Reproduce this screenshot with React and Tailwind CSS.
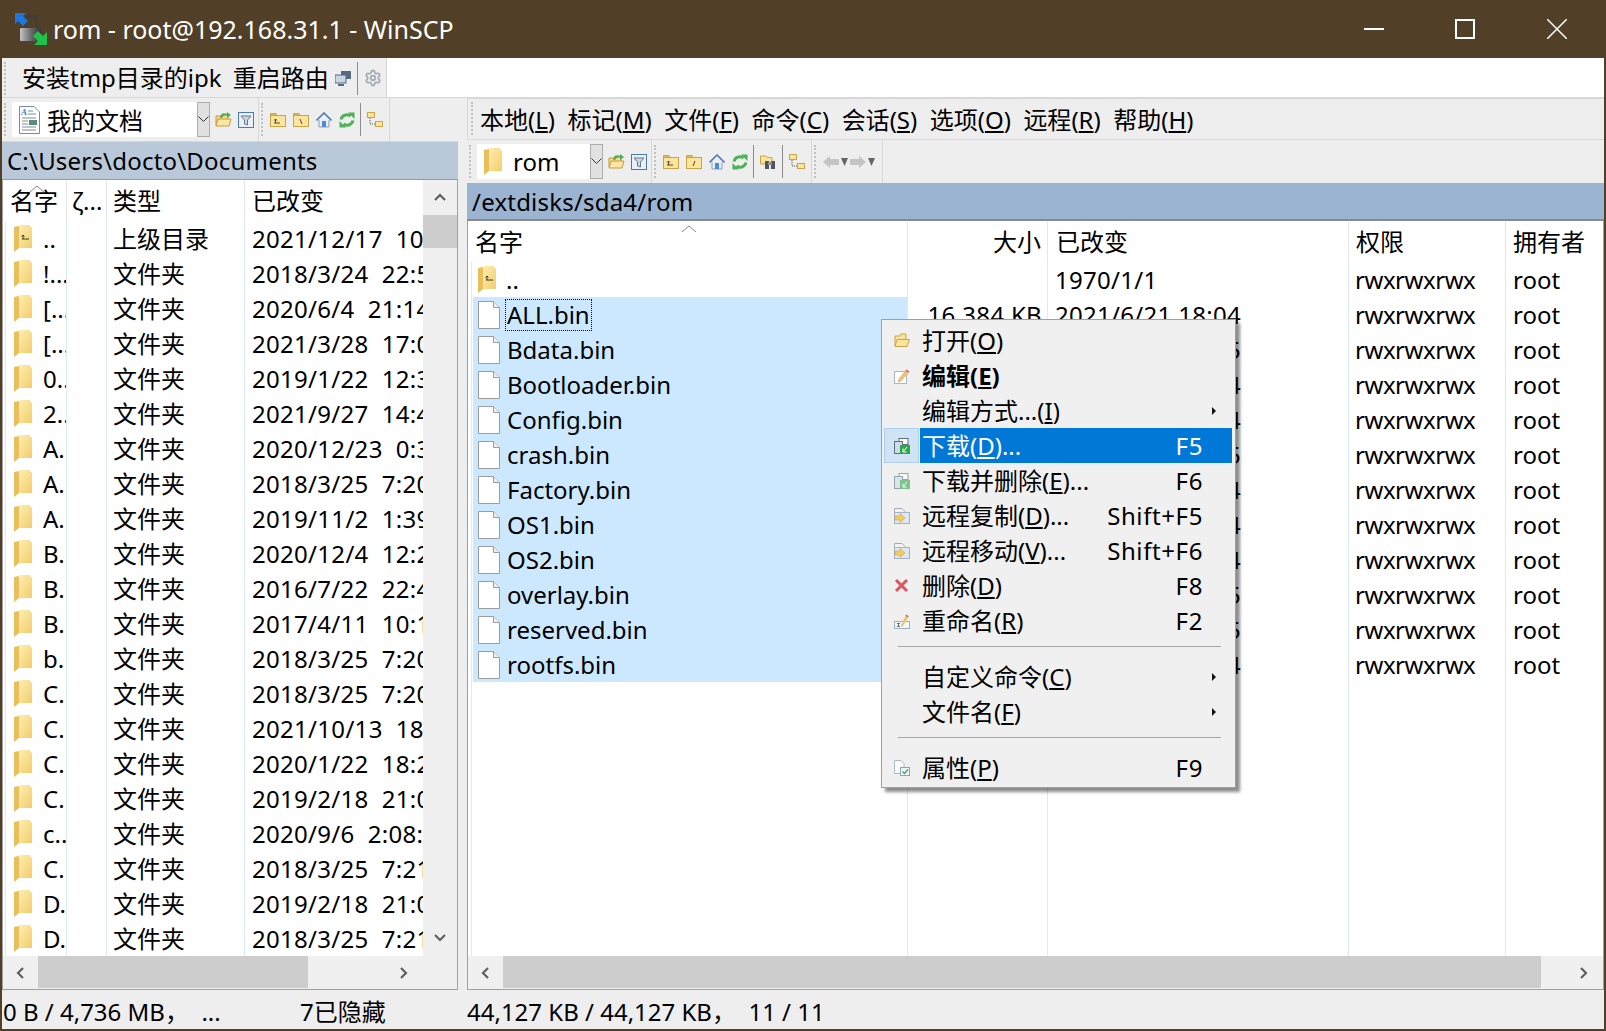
import { Settings } from 'lucide-react'

const leftRows = [
  ['..', '上级目录', '2021/12/17  10:12:08', true],
  ['!...', '文件夹', '2018/3/24  22:54:10'],
  ['[...', '文件夹', '2020/6/4  21:14:33'],
  ['[...', '文件夹', '2021/3/28  17:02:51'],
  ['0...', '文件夹', '2019/1/22  12:31:05'],
  ['2...', '文件夹', '2021/9/27  14:47:19'],
  ['A.', '文件夹', '2020/12/23  0:34:42'],
  ['A.', '文件夹', '2018/3/25  7:20:16'],
  ['A.', '文件夹', '2019/11/2  1:39:27'],
  ['B.', '文件夹', '2020/12/4  12:22:09'],
  ['B.', '文件夹', '2016/7/22  22:41:38'],
  ['B.', '文件夹', '2017/4/11  10:15:50'],
  ['b.', '文件夹', '2018/3/25  7:20:16'],
  ['C.', '文件夹', '2018/3/25  7:20:16'],
  ['C.', '文件夹', '2021/10/13  18:06:44'],
  ['C.', '文件夹', '2020/1/22  18:25:01'],
  ['C.', '文件夹', '2019/2/18  21:03:12'],
  ['c...', '文件夹', '2020/9/6  2:08:37'],
  ['C.', '文件夹', '2018/3/25  7:21:16'],
  ['D.', '文件夹', '2019/2/18  21:03:12'],
  ['D.', '文件夹', '2018/3/25  7:21:16'],
]

const rightRows = [
  ['ALL.bin', '16,384 KB', '2021/6/21 18:04'],
  ['Bdata.bin', '1,024 KB', '2021/6/21 18:05'],
  ['Bootloader.bin', '512 KB', '2021/6/21 18:04'],
  ['Config.bin', '256 KB', '2021/6/21 18:04'],
  ['crash.bin', '256 KB', '2021/6/21 18:05'],
  ['Factory.bin', '256 KB', '2021/6/21 18:04'],
  ['OS1.bin', '4,096 KB', '2021/6/21 18:04'],
  ['OS2.bin', '4,096 KB', '2021/6/21 18:04'],
  ['overlay.bin', '1,024 KB', '2021/6/21 18:05'],
  ['reserved.bin', '1,024 KB', '2021/6/21 18:05'],
  ['rootfs.bin', '15,199 KB', '2021/6/21 18:04'],
]

const Mn = ({ t, k, after = '' }) => <span>{t}(<u className="underline underline-offset-2">{k}</u>){after}</span>

function Folder({ up }) {
  return (
    <svg width="20" height="28" viewBox="0 0 20 28" className="shrink-0">
      <defs>
        <linearGradient id="fg" x1="0" y1="0" x2="1" y2="1">
          <stop offset="0" stopColor="#fdeeb0" />
          <stop offset="1" stopColor="#f3cd6c" />
        </linearGradient>
      </defs>
      <path d="M0 2 L5 1 V23 L0 27 Z" fill="#e9bf5b" />
      <path d="M5 0 H16 V1 L18 3 V23 H5 Z" fill="url(#fg)" />
      {up && <path d="M8 14 h7 M9 14 v-4 M7.5 11.5 L9 10 L10.5 11.5" stroke="#3a3a20" fill="none" />}
    </svg>
  )
}

function FileIcon() {
  return (
    <svg width="22" height="28" viewBox="0 0 22 28" className="shrink-0">
      <path d="M.5.5 H15.5 L21.5 6.5 V27.5 H.5 Z" fill="#fff" stroke="#9c9c9c" />
      <path d="M15.5.5 V6.5 H21.5" fill="#eee" stroke="#9c9c9c" />
    </svg>
  )
}

const TitleIcon = () => (
  <svg width="32" height="32" viewBox="0 0 32 32" className="shrink-0">
    <defs>
      <linearGradient id="lock" x1="0" y1="0" x2="1" y2="0">
        <stop offset="0" stopColor="#c4c4c4" />
        <stop offset=".5" stopColor="#6e6e6e" />
        <stop offset="1" stopColor="#333" />
      </linearGradient>
    </defs>
    <path d="M10 16 V9 a6 6 0 0 1 12 0 V16" fill="none" stroke="#3d3d3d" strokeWidth="2.6" />
    <rect x="5" y="15" width="21" height="13" rx="1" fill="url(#lock)" />
    <path d="M0 0 H11 L8 3 L13 8 L8 13 L3 8 L0 11 Z" fill="#1c78e0" />
    <path d="M32 32 H19 L23 28 L18 23 L23 18 L28 23 L32 19 Z" fill="#1fc24a" />
  </svg>
)

const OpenFolder = () => (
  <svg width="17" height="17" viewBox="0 0 17 17" className="shrink-0">
    <path d="M1 5 H6 L7 3 H13 V14 H1 Z" fill="#f8dc8a" stroke="#c49a3c" />
    <path d="M1 15 L3 8 H16 L14 15 Z" fill="#fbe7a4" stroke="#c49a3c" />
    <path d="M5 7 C6 2 9 2 12 3 V1 L16 4 L12 7 V5 C10 4 8 5 7 7 Z" fill="#4fae5c" />
  </svg>
)

const Filter = () => (
  <svg width="16" height="16" viewBox="0 0 16 16" className="shrink-0">
    <rect x=".5" y=".5" width="15" height="15" fill="#e8f1fa" stroke="#4a7bb0" />
    <path d="M3 4 H13 L9.5 8 V13 L6.5 12 V8 Z" fill="#d0d6dc" stroke="#6c7884" />
  </svg>
)

const TbFolder = ({ glyph }) => (
  <svg width="16" height="16" viewBox="0 0 16 16" className="shrink-0">
    <path d="M.5 3 V1.5 H6 L7 3 Z" fill="#f4d46f" stroke="#c9a548" />
    <rect x=".5" y="3.5" width="15" height="11" fill="#fbe59c" stroke="#c9a548" />
    {glyph === 'up' && <path d="M4 11 H10 M5.5 11 V7 M4 8.5 L5.5 7 L7 8.5" stroke="#4a4a2a" fill="none" />}
    {glyph === 'root' && <path d="M7 7 L9 12" stroke="#4a4a2a" fill="none" />}
    {glyph === 'rootRemote' && <path d="M9 7 L7 12" stroke="#4a4a2a" fill="none" />}
  </svg>
)

const Home = () => (
  <svg width="16" height="16" viewBox="0 0 16 16" className="shrink-0">
    <path d="M3 8 V15 H13 V8" fill="#e6eef8" stroke="#8aa0b8" />
    <path d="M.5 8.5 L8 1 L15.5 8.5" fill="none" stroke="#4d7fb8" strokeWidth="1.6" />
    <rect x="6" y="9" width="4" height="6" fill="#4f8bd0" />
  </svg>
)

const Refresh = () => (
  <svg width="16" height="16" viewBox="0 0 16 16" className="shrink-0">
    <path d="M2 7.5 A6 6 0 0 1 11.5 4" fill="none" stroke="#49b356" strokeWidth="3" />
    <path d="M9 .5 H15.5 V7 Z" fill="#49b356" />
    <path d="M14 8.5 A6 6 0 0 1 4.5 12" fill="none" stroke="#49b356" strokeWidth="3" />
    <path d="M7 15.5 H.5 V9 Z" fill="#49b356" />
  </svg>
)

const Tree = () => (
  <svg width="16" height="16" viewBox="0 0 16 16" className="shrink-0">
    <rect x=".5" y=".5" width="7" height="5" fill="#fbe59c" stroke="#c9a548" />
    <rect x="8.5" y="9.5" width="7" height="5" fill="#fbe59c" stroke="#c9a548" />
    <path d="M3 6 V12 H8" stroke="#555" strokeDasharray="1 1" fill="none" />
  </svg>
)

const Bino = () => (
  <svg width="16" height="16" viewBox="0 0 16 16" className="shrink-0">
    <path d="M.5 2 H6 L7 3.5 H12 V10 H.5 Z" fill="#fbe59c" stroke="#c9a548" />
    <rect x="5" y="7" width="4" height="8" fill="#50565c" />
    <rect x="11" y="7" width="4" height="8" fill="#50565c" />
    <rect x="8" y="8" width="4" height="3" fill="#8a9096" />
  </svg>
)

const ArrowL = ({ flip }) => (
  <svg width="16" height="12" viewBox="0 0 16 12" className={flip ? 'shrink-0 -scale-x-100' : 'shrink-0'}>
    <path d="M0 6 L7 0 V3 H16 V9 H7 V12 Z" fill="#c4c4c4" />
  </svg>
)

const Tri = () => (
  <svg width="7" height="8" viewBox="0 0 7 8" className="shrink-0">
    <path d="M0 0 H7 L3.5 8 Z" fill="#666" />
  </svg>
)

const Chevron = ({ dir }) => {
  const d = { up: 'M1 8 L6 3 L11 8', down: 'M1 3 L6 8 L11 3', left: 'M8 1 L3 6 L8 11', right: 'M4 1 L9 6 L4 11' }[dir]
  return (
    <svg width="12" height="12" viewBox="0 0 12 12" className="shrink-0">
      <path d={d} fill="none" stroke="#606060" strokeWidth="2.2" />
    </svg>
  )
}

const Gripper = () => <div className="w-0 h-[33px] ml-[2px] border-l-2 border-dotted border-[#c0c0c0] shrink-0" />
const Sep = () => <div className="w-px h-[33px] bg-[#8c8c8c] shrink-0" />

function Combo({ width, icon, label, textClass }) {
  return (
    <div className="flex h-[35px] items-stretch shrink-0">
      <div className={`${width} bg-white flex items-center`}>
        {icon}
        <span className={textClass}>{label}</span>
      </div>
      <div className="w-[13px] bg-[#e1e1e1] border border-[#adadad] flex items-center justify-center">
        <svg width="11" height="7" viewBox="0 0 11 7"><path d="M.5 .5 L5.5 5.5 L10.5 .5" fill="none" stroke="#333" /></svg>
      </div>
    </div>
  )
}

const DocIcon = () => (
  <svg width="21" height="28" viewBox="0 0 21 28" className="ml-[7px] shrink-0">
    <path d="M.5.5 H15 L20.5 6 V27.5 H.5 Z" fill="#fff" stroke="#7a8a9a" />
    <text x="2" y="9" fontSize="9" fontStyle="italic" fontWeight="700" fill="#2a7fd0" fontFamily="Liberation Serif, serif">A</text>
    <path d="M9 5 H14 M9 8 H17 M3 12 H17 M3 21 H17 M3 24 H17" stroke="#7a8a9a" />
    <rect x="10" y="14" width="8" height="5" fill="#5d8a78" />
    <path d="M3 15 H9 M3 18 H9" stroke="#7a8a9a" />
  </svg>
)

const MenuOpen = () => (
  <svg width="16" height="15" viewBox="0 0 16 15"><path d="M1 3 H6 L7 1 H12 V13 H1 Z" fill="#f8e2a0" stroke="#c9a548" /><path d="M1 13.5 L3 6.5 H15.5 L13 13.5 Z" fill="#fbe59c" stroke="#c9a548" /></svg>
)
const MenuEdit = () => (
  <svg width="16" height="16" viewBox="0 0 16 16"><rect x=".5" y="3.5" width="12" height="12" fill="#fff" stroke="#a8b8c8" /><path d="M5 11 L12 2 L15 4 L7 13 L4 14 Z" fill="#f1c56c" stroke="#c0a060" strokeWidth=".5" /><path d="M12.5 1.5 L15.5 3.5 L14.5 4.8 L11.5 3 Z" fill="#d97070" /></svg>
)
const MenuDownload = ({ faded }) => (
  <svg width="16" height="16" viewBox="0 0 16 16" className={faded ? 'opacity-60' : ''}>
    <rect x="5" y=".5" width="9" height="6" fill="#fff" stroke="#5c6f82" />
    <rect x=".5" y="3.5" width="8" height="12" fill="#cfdbe6" stroke="#5c6f82" />
    <rect x="6" y="7" width="10" height="9" fill="#2fa84a" />
    <path d="M9 14 L13 9 M9 10.5 V14 H12.5" stroke="#fff" fill="none" />
  </svg>
)
const MenuCopy = () => (
  <svg width="16" height="16" viewBox="0 0 16 16"><path d="M.5.5 H8 L11 3.5 V6 H.5 Z" fill="#f4f4f4" stroke="#a8a8b8" /><rect x=".5" y="4.5" width="15" height="11" fill="#dfe8f2" stroke="#a0b4c8" /><path d="M1 8 H6 V5.5 L11 10 L6 14.5 V12 H1 Z" fill="#f0ce60" stroke="#c9a548" strokeWidth=".6" /></svg>
)
const MenuDelete = () => (
  <svg width="15" height="15" viewBox="0 0 15 15"><path d="M2 2 L13 13 M13 2 L2 13" stroke="#d9575f" strokeWidth="3" /></svg>
)
const MenuRename = () => (
  <svg width="16" height="16" viewBox="0 0 16 16"><rect x=".5" y="8.5" width="15" height="7" fill="#f4f8fc" stroke="#9cb0c4" /><path d="M3 10.5 H6 M3 13.5 H6 M4.5 10.5 V13.5" stroke="#667" /><path d="M7 12 L12 2 L14.5 3.5 L9 13 L7 14 Z" fill="#f1c56c" /><path d="M12 1.5 L14.8 3 L14 4.4 L11.3 3 Z" fill="#d97070" /></svg>
)
const MenuProps = () => (
  <svg width="16" height="16" viewBox="0 0 16 16"><path d="M.5.5 H7 L10 3.5 V13.5 H.5 Z" fill="#fff" stroke="#a8b8c8" /><rect x="6.5" y="7.5" width="9" height="8" fill="#eef4fa" stroke="#8aa4bc" /><path d="M8.5 11.5 L10.5 13.5 L14 9.5" stroke="#3fa84a" fill="none" strokeWidth="1.2" /></svg>
)

const menuItems = [
  { icon: <MenuOpen />, label: <Mn t="打开" k="O" /> },
  { icon: <MenuEdit />, label: <Mn t="编辑" k="E" />, bold: true },
  { label: <Mn t="编辑方式..." k="I" />, sub: true },
  { icon: <MenuDownload />, label: <Mn t="下载" k="D" after="..." />, key: 'F5', active: true },
  { icon: <MenuDownload faded />, label: <Mn t="下载并删除" k="E" after="..." />, key: 'F6' },
  { icon: <MenuCopy />, label: <Mn t="远程复制" k="D" after="..." />, key: 'Shift+F5' },
  { icon: <MenuCopy />, label: <Mn t="远程移动" k="V" after="..." />, key: 'Shift+F6' },
  { icon: <MenuDelete />, label: <Mn t="删除" k="D" />, key: 'F8' },
  { icon: <MenuRename />, label: <Mn t="重命名" k="R" />, key: 'F2' },
  { sep: true },
  { label: <Mn t="自定义命令" k="C" />, sub: true },
  { label: <Mn t="文件名" k="F" />, sub: true },
  { sep: true },
  { icon: <MenuProps />, label: <Mn t="属性" k="P" />, key: 'F9' },
]

function ContextMenu() {
  return (
    <div className="absolute left-[879px] top-[261px] w-[355px] h-[469px] bg-[#f0f0f0] border border-[#a0a0a0] pt-[3px] pl-[2px] shadow-[4px_4px_3px_rgba(0,0,0,0.45)]">
      {menuItems.map((item, i) =>
        item.sep ? (
          <div key={i} className="h-[21px] pt-[8px] pl-[14px] pr-[14px]"><div className="h-px bg-[#a8a8a8]" /></div>
        ) : (
          <div key={i} className="flex h-[35px] items-stretch">
            <div className={`w-[35px] mr-px flex items-center justify-center ${item.active ? 'bg-[#cfe3f5] border border-[#aed0ec]' : ''}`}>{item.icon}</div>
            <div className={`w-[312px] flex items-center pl-[2px] pr-[29px] ${item.active ? 'bg-[#0078d7] text-white' : ''} ${item.bold ? 'font-bold' : ''}`}>
              <span className="flex-1">{item.label}</span>
              {item.key && <span className="tracking-[0.6px]">{item.key}</span>}
              {item.sub && (
                <svg width="4" height="8" viewBox="0 0 4 8" className="-mr-[13px]"><path d="M0 0 L4 4 L0 8 Z" fill="#111" /></svg>
              )}
            </div>
          </div>
        )
      )}
    </div>
  )
}

function LeftPane() {
  return (
    <div className="w-[456px] flex flex-col shrink-0">
      <div className="h-[44px] flex border-b border-[#d8d8d8] bg-[#eeeeee] shrink-0">
        <div className="w-[257px] flex items-center border-r border-[#d8d8d8] shrink-0">
          <Gripper />
          <div className="w-[6px]" />
          <Combo width="w-[185px]" icon={<DocIcon />} label="我的文档" textClass="ml-[7px] pt-[2px]" />
          <div className="w-[5px]" />
          <OpenFolder />
          <div className="w-[6px]" />
          <Filter />
        </div>
        <div className="w-[131px] flex items-center border-r border-[#d8d8d8] shrink-0">
          <Gripper />
          <div className="w-[7px]" />
          <div className="flex items-center gap-[7px]">
            <TbFolder glyph="up" />
            <TbFolder glyph="root" />
            <Home />
            <Refresh />
          </div>
          <div className="w-[5px]" />
          <Sep />
          <div className="w-[6px]" />
          <Tree />
        </div>
      </div>
      <div className="h-[38px] bg-[#b9c9da] px-[5px] flex items-center tracking-[0.2px] border-b border-[#9a9a9a] shrink-0">C:\Users\docto\Documents</div>
      <div className="flex-1 flex border-x border-[#a0a0a0] min-h-0">
        <div className="w-[420px] bg-white flex flex-col relative">
          <svg width="14" height="8" viewBox="0 0 14 8" className="absolute left-[27px] top-[5px]"><path d="M0 7 L7 1 L14 7" fill="none" stroke="#8a8a8a" /></svg>
          <div className="h-[41px] flex items-center pt-[1px] shrink-0">
            <div className="w-[64px] h-full flex items-center pl-[7px] border-r border-[#e5e5e5] overflow-hidden">名字</div>
            <div className="w-[40px] h-full flex items-center pl-[5px] border-r border-[#e5e5e5] overflow-hidden">ζ...</div>
            <div className="w-[138px] h-full flex items-center pl-[6px] border-r border-[#e5e5e5]">类型</div>
            <div className="flex-1 pl-[7px]">已改变</div>
          </div>
          <div className="flex-1 min-h-0 overflow-hidden border-l border-[#d9ebf9] ml-[2px]">
            {leftRows.map((r, i) => (
              <div key={i} className="h-[35px] flex items-center whitespace-nowrap">
                <div className="w-[61px] h-full flex items-center pl-[8px] border-r border-[#d9ebf9] overflow-hidden shrink-0">
                  <Folder up={r[3]} />
                  <span className="ml-[9px]">{r[0]}</span>
                </div>
                <div className="w-[40px] h-full border-r border-[#d9ebf9] shrink-0" />
                <div className="w-[138px] h-full flex items-center pl-[6px] border-r border-[#d9ebf9] shrink-0">{r[1]}</div>
                <div className="flex-1 pl-[7px] overflow-hidden whitespace-pre tracking-[0.3px]">{r[2]}</div>
              </div>
            ))}
          </div>
        </div>
        <div className="flex-1 flex flex-col bg-[#f0f0f0]">
          <div className="h-[35px] flex items-center justify-center shrink-0"><Chevron dir="up" /></div>
          <div className="h-[33px] bg-[#cdcdcd] shrink-0" />
          <div className="flex-1" />
          <div className="h-[36px] flex items-center justify-center shrink-0"><Chevron dir="down" /></div>
        </div>
      </div>
      <div className="h-[34px] flex items-stretch bg-[#f0f0f0] border border-t-0 border-[#a0a0a0] shrink-0">
        <div className="w-[35px] flex items-center justify-center"><Chevron dir="left" /></div>
        <div className="w-[270px] bg-[#cdcdcd] h-[32px]" />
        <div className="flex-1 flex items-center justify-end pr-[48px]"><Chevron dir="right" /></div>
      </div>
    </div>
  )
}

function RightPane() {
  return (
    <div className="flex-1 flex flex-col min-w-0">
      <div className="h-[42px] bg-[#eeeeee] border-y border-[#d8d8d8] border-l flex items-center gap-[12.5px] pl-[12px] pt-[2px] shrink-0 whitespace-nowrap relative">
        <div className="absolute left-[1px] top-[3px]"><Gripper /></div>
        <Mn t="本地" k="L" />
        <Mn t="标记" k="M" />
        <Mn t="文件" k="F" />
        <Mn t="命令" k="C" />
        <Mn t="会话" k="S" />
        <Mn t="选项" k="O" />
        <Mn t="远程" k="R" />
        <Mn t="帮助" k="H" />
      </div>
      <div className="h-[43px] flex bg-[#eeeeee] shrink-0">
        <div className="w-[185px] flex items-center border-r border-[#d8d8d8] shrink-0">
          <Gripper />
          <div className="w-[6px]" />
          <Combo width="w-[113px]" icon={<div className="ml-[7px]"><Folder /></div>} label="rom" textClass="ml-[9px]" />
          <div className="w-[5px]" />
          <OpenFolder />
          <div className="w-[6px]" />
          <Filter />
        </div>
        <div className="w-[160px] flex items-center border-r border-[#d8d8d8] shrink-0">
          <Gripper />
          <div className="w-[7px]" />
          <div className="flex items-center gap-[7px]">
            <TbFolder glyph="up" />
            <TbFolder glyph="rootRemote" />
            <Home />
            <Refresh />
          </div>
          <div className="w-[5px]" />
          <Sep />
          <div className="w-[6px]" />
          <Bino />
          <div className="w-[6px]" />
          <Sep />
          <div className="w-[6px]" />
          <Tree />
        </div>
        <div className="w-[71px] flex items-center border-r border-[#d8d8d8] shrink-0">
          <Gripper />
          <div className="w-[7px]" />
          <ArrowL />
          <div className="w-[2px]" />
          <Tri />
          <div className="w-[2px]" />
          <ArrowL flip />
          <div className="w-[2px]" />
          <Tri />
        </div>
      </div>
      <div className="h-[38px] bg-[#9ab4d1] px-[5px] pt-[1px] flex items-center tracking-[0.2px] border-b-2 border-[#8a8a8a] shrink-0">/extdisks/sda4/rom</div>
      <div className="flex-1 bg-white border-x border-[#a0a0a0] min-h-0 flex flex-col relative">
        <svg width="14" height="8" viewBox="0 0 14 8" className="absolute left-[214px] top-[4px]"><path d="M0 7 L7 1 L14 7" fill="none" stroke="#8a8a8a" /></svg>
        <div className="h-[41px] flex shrink-0 items-center pt-[1px]">
          <div className="w-[440px] h-full flex items-center pl-[7px] border-r border-[#e5e5e5] shrink-0">名字</div>
          <div className="w-[140px] h-full flex items-center justify-end pr-[6px] border-r border-[#e5e5e5] shrink-0">大小</div>
          <div className="w-[301px] h-full flex items-center pl-[8px] border-r border-[#e5e5e5] shrink-0">已改变</div>
          <div className="w-[157px] h-full flex items-center pl-[7px] border-r border-[#e5e5e5] shrink-0">权限</div>
          <div className="flex-1 pl-[7px] whitespace-nowrap">拥有者</div>
        </div>
        <div className="flex-1 min-h-0 relative ml-[3px] border-l border-[#d9ebf9]">
          <div className="absolute inset-0 flex pointer-events-none">
            <div className="w-[436px] border-r border-[#d9ebf9] shrink-0" />
            <div className="w-[140px] border-r border-[#d9ebf9] shrink-0" />
            <div className="w-[301px] border-r border-[#d9ebf9] shrink-0" />
            <div className="w-[157px] border-r border-[#d9ebf9] shrink-0" />
          </div>
          <div className="relative flex h-[35px] items-center whitespace-pre">
            <div className="w-[436px] flex items-center pl-[6px] shrink-0"><Folder up /><span className="ml-[8px]">..</span></div>
            <div className="w-[140px] shrink-0" />
            <div className="w-[301px] pl-[7px] tracking-[0.3px] shrink-0">1970/1/1</div>
            <div className="w-[157px] pl-[6px] tracking-[-0.45px] shrink-0">rwxrwxrwx</div>
            <div className="pl-[7px]">root</div>
          </div>
          {rightRows.map((r, i) => (
            <div key={r[0]} className="relative flex h-[35px] items-center whitespace-pre">
              <div className="w-[434px] ml-[1px] mr-[1px] h-full flex items-center pl-[5px] bg-[#cce8ff] shrink-0">
                <FileIcon />
                <span className={`ml-[6px] px-px leading-[30px] ${i === 0 ? 'outline outline-1 outline-dotted outline-black' : ''}`}>{r[0]}</span>
              </div>
              <div className="w-[140px] pr-[6px] text-right tracking-[0.3px] shrink-0">{r[1]}</div>
              <div className="w-[301px] pl-[7px] tracking-[0.3px] shrink-0">{r[2]}</div>
              <div className="w-[157px] pl-[6px] tracking-[-0.45px] shrink-0">rwxrwxrwx</div>
              <div className="pl-[7px]">root</div>
            </div>
          ))}
        </div>
      </div>
      <div className="h-[34px] flex items-stretch bg-[#f0f0f0] border border-t-0 border-[#a0a0a0] shrink-0">
        <div className="w-[35px] flex items-center justify-center"><Chevron dir="left" /></div>
        <div className="w-[1038px] bg-[#cdcdcd] h-[32px]" />
        <div className="flex-1 flex items-center justify-end pr-[14px]"><Chevron dir="right" /></div>
      </div>
    </div>
  )
}

export default function App() {
  return (
    <div className="w-[1606px] h-[1031px] bg-[#523f27] flex flex-col overflow-hidden text-[24px] leading-none text-black font-['Noto_Sans','Noto_Sans_CJK_SC',sans-serif]">
      {/* Title bar */}
      <div className="h-[58px] flex items-center text-white shrink-0">
        <div className="ml-[15px] mr-[6px]"><TitleIcon /></div>
        <span className="text-[25px]">rom - root@192.168.31.1 - WinSCP</span>
        <div className="ml-auto flex items-center">
          <div className="w-[20px] h-[2px] bg-white mr-[71px]" />
          <div className="w-[20px] h-[20px] border-2 border-white mr-[72px]" />
          <svg width="20" height="20" viewBox="0 0 20 20" className="mr-[39px]"><path d="M0 0 L20 20 M20 0 L0 20" stroke="#fff" strokeWidth="1.5" /></svg>
        </div>
      </div>

      <div className="flex-1 mx-[2px] mb-[2px] bg-white relative flex flex-col min-h-0">
        {/* Custom commands toolbar */}
        <div className="h-[40px] border-b border-[#d8d8d8] shrink-0 flex">
          <div className="w-[385px] bg-[#eeeeee] flex items-center pt-[1px] border-r border-[#d8d8d8]">
            <Gripper />
            <span className="ml-[16px] whitespace-nowrap">安装tmp目录的ipk</span>
            <span className="ml-[11px] whitespace-nowrap">重启路由</span>
            <svg width="16" height="16" viewBox="0 0 16 16" className="ml-[6px] shrink-0">
              <rect x="6" y="1" width="10" height="8" fill="#56697d" />
              <rect x="0" y="5" width="11" height="8" fill="#c8d6e4" stroke="#56697d" />
              <rect x="3" y="14" width="6" height="2" fill="#56697d" />
            </svg>
            <div className="w-[6px]" />
            <div className="w-px h-[33px] bg-[#8c8c8c] shrink-0" />
            <Settings size={18} strokeWidth={2.4} color="#a4adb6" className="ml-[6px] shrink-0" />
          </div>
        </div>

        <div className="flex-1 flex min-h-0">
          <LeftPane />
          <div className="w-[9px] bg-[#eeeeee] shrink-0" />
          <RightPane />
        </div>

        {/* Status bar */}
        <div className="h-[39px] bg-[#eeeeee] flex items-center pt-[5px] shrink-0 whitespace-pre">
          <span className="w-[298px] pl-px">0 B / 4,736 MB，  ...</span>
          <span className="w-[167px]">7已隐藏</span>
          <span>44,127 KB / 44,127 KB，  11 / 11</span>
        </div>

        <ContextMenu />
      </div>
    </div>
  )
}
